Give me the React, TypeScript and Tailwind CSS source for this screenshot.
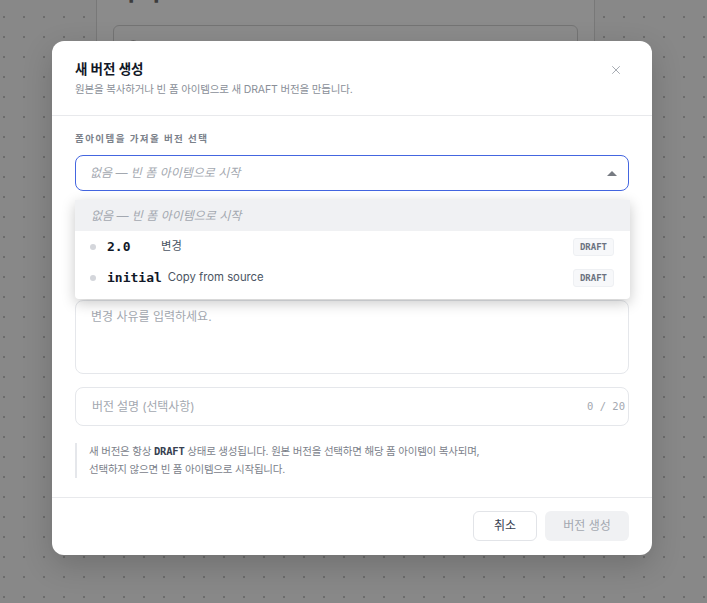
import { X, Search } from "lucide-react";

const sans = "font-['Inter','Noto_Sans_CJK_KR',sans-serif]";
const mono = "font-['DejaVu_Sans_Mono','Liberation_Mono',monospace]";

function Badge() {
  return (
    <span
      className={`${mono} rounded-[3px] border border-[#eef0f3] bg-[#f7f8fa] px-[6px] py-[2px] text-[9px] font-bold leading-[12px] text-[#6b7280]`}
    >
      DRAFT
    </span>
  );
}

function Option({ version, note }: { version: string; note: string }) {
  return (
    <div className="flex h-[31px] items-center pl-[15px] pr-[16px]">
      <span className="h-[6px] w-[6px] rounded-full bg-[#d4d6db]" />
      <span
        className={`${mono} ml-[11px] min-w-[48px] text-[13px] font-bold text-[#111827]`}
      >
        {version}
      </span>
      <span className="ml-[6px] flex-1 text-[11.3px] text-[#4b5563]">{note}</span>
      <Badge />
    </div>
  );
}

export default function App() {
  return (
    <div
      className={`${sans} relative h-[603px] w-[707px] overflow-hidden bg-[#888888] bg-[radial-gradient(circle,#6c6c6c_1px,transparent_1.3px)] bg-size-[20px_20px] bg-position-[-6px_7px]`}
    >
      {/* page behind the dialog */}
      <div className="ml-[96px] h-[320px] w-[499px] border-x border-[#787878] bg-[#8b8b8b] px-[16px]">
        <div className="-mt-[22px] text-[26px] font-bold leading-[26px] text-[#3c3c3c]">
          라이브
        </div>
        <div className="mt-[21px] flex h-[44px] items-center rounded-[6px] border border-[#747474] px-[12px]">
          <Search size={16} className="text-[#5a5a5a]" />
        </div>
      </div>

      {/* dialog layer */}
      <div className="absolute inset-0 pl-[52px] pt-[41px]">
        <div className="w-[600px] rounded-[12px] bg-white shadow-[0_10px_30px_rgba(0,0,0,0.18)]">
          <div className="flex items-start justify-between border-b border-[#e8e9ec] px-[23px] pb-[17px] pt-[18px]">
            <div>
              <div className="text-[13.5px] font-bold leading-[20px] text-[#111827]">
                새 버전 생성
              </div>
              <div className="mt-[3px] text-[10.5px] leading-[16px] tracking-[-0.015em] text-[#8a8f98]">
                원본을 복사하거나 빈 폼 아이템으로 새 DRAFT 버전을 만듭니다.
              </div>
            </div>
            <X size={14} strokeWidth={1.5} className="mr-[6px] mt-[4px] text-[#9aa0a8]" />
          </div>

          <div className="flex flex-col px-[23px] pb-[19px] pt-[16px]">
            <div className="text-[9.5px] font-semibold leading-[14px] tracking-[0.15em] text-[#7b818a]">
              폼아이템을 가져올 버전 선택
            </div>

            <div className="relative mt-[9px]">
              <div className="flex h-[36px] items-center justify-between rounded-[8px] border-[1.5px] border-[#4466e0] pl-[14px] pr-[11px]">
                <span className="text-[12px] italic text-[#a3a8b0]">
                  없음 — 빈 폼 아이템으로 시작
                </span>
                <span className="h-0 w-0 border-x-[5px] border-b-[5px] border-x-transparent border-b-[#777b82]" />
              </div>

              <div className="absolute left-0 right-[-1px] top-[45px] z-10 overflow-hidden rounded-b-[4px] bg-white pb-[6px] shadow-[0_4px_14px_rgba(0,0,0,0.22)]">
                <div className="flex h-[31px] items-center bg-[#f0f1f3] pl-[16px] text-[12px] italic text-[#a3a8b0]">
                  없음 — 빈 폼 아이템으로 시작
                </div>
                <Option version="2.0" note="변경" />
                <Option version="initial" note="Copy from source" />
              </div>
            </div>

            {/* fields hidden under the open list */}
            <div className="mt-[16px] flex h-[84px] flex-col justify-center">
              <div className="flex h-[32px] gap-2">
                <div className="flex-1 rounded-[8px] border border-[#e5e7eb]" />
                <div className="flex-1 rounded-[8px] border border-[#e5e7eb]" />
              </div>
            </div>

            <div className="mt-[9px] h-[74px] rounded-[8px] border border-[#e5e7eb] px-[15px] pt-[7px] text-[12px] leading-[18px] text-[#a3a8b0]">
              변경 사유를 입력하세요.
            </div>

            <div className="mt-[13px] flex h-[39px] items-center justify-between rounded-[8px] border border-[#e5e7eb] pl-[16px] pr-[3px]">
              <span className="text-[12px] tracking-[-0.01em] text-[#a3a8b0]">버전 설명 (선택사항)</span>
              <span className={`${mono} text-[10.5px] text-[#a3a8b0]`}>0 / 20</span>
            </div>

            <div className="mt-[17px] border-l-2 border-[#e5e7eb] pl-[12px] text-[10.5px] leading-[17.5px] tracking-[-0.02em] text-[#7b818a]">
              새 버전은 항상 <span className={`${mono} font-bold text-[#374151]`}>DRAFT</span>{" "}
              상태로 생성됩니다. 원본 버전을 선택하면 해당 폼 아이템이 복사되며,
              <br />
              선택하지 않으면 빈 폼 아이템으로 시작됩니다.
            </div>
          </div>

          <div className="flex justify-end gap-[8px] border-t border-[#e8e9ec] px-[23px] pb-[14px] pt-[13px]">
            <button className="h-[30px] w-[64px] rounded-[6px] border border-[#e2e4e8] bg-white text-[12px] text-[#374151]">
              취소
            </button>
            <button className="h-[30px] w-[84px] rounded-[6px] bg-[#f0f1f3] text-[12px] text-[#a3a8b0]">
              버전 생성
            </button>
          </div>
        </div>
      </div>
    </div>
  );
}
